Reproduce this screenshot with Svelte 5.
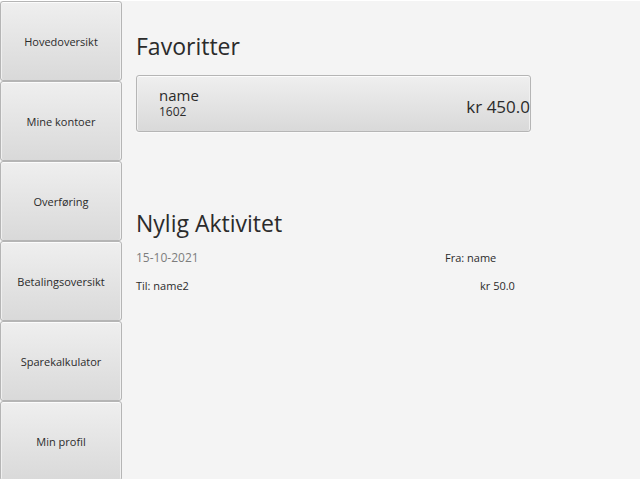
<script>
  const menu = ['Hovedoversikt', 'Mine kontoer', 'Overføring', 'Betalingsoversikt', 'Sparekalkulator', 'Min profil'];
  const favorites = [{ name: 'name', account: '1602', balance: 'kr 450.0' }];
  const activity = [{ date: '15-10-2021', from: 'Fra: name', to: 'Til: name2', amount: 'kr 50.0' }];
</script>

<div class="app">
  <nav>
    {#each menu as item}
      <button>{item}</button>
    {/each}
  </nav>
  <main>
    <section class="favorites">
      <h2>Favoritter</h2>
      {#each favorites as fav}
        <button class="card">
          <span class="info">
            <span class="name">{fav.name}</span>
            <span class="account">{fav.account}</span>
          </span>
          <span class="balance">{fav.balance}</span>
        </button>
      {/each}
    </section>
    <section>
      <h2>Nylig Aktivitet</h2>
      {#each activity as a}
        <div class="entry">
          <span class="date">{a.date}</span>
          <span>{a.from}</span>
          <span>{a.to}</span>
          <span class="amount">{a.amount}</span>
        </div>
      {/each}
    </section>
  </main>
</div>

<style>
  :global(body) {
    background: #f4f4f4;
  }
  .app {
    display: flex;
    min-height: 100vh;
    max-height: 100vh;
    overflow: hidden;
    box-sizing: border-box;
    border-top: 1px solid #fff;
    font: 11px/16px 'Open Sans', 'Noto Sans', sans-serif;
    color: #2b2b2b;
  }
  nav {
    flex: 0 0 122px;
    display: flex;
    flex-direction: column;
  }
  button {
    font: inherit;
    color: inherit;
    border: 1px solid #b5b5b5;
    border-radius: 3px;
    background: linear-gradient(#efefef, #d9d9d9);
    box-shadow: inset 0 1px #fcfcfc, inset 1px 0 #f0f0f0, inset -1px 0 #f0f0f0;
    padding: 0;
  }
  nav button {
    flex: 0 0 80px;
    padding-top: 2px;
  }
  main {
    flex: 1;
    padding: 27px 14px;
    min-width: 0;
  }
  h2 {
    margin: 0;
    font-size: 23px;
    line-height: 36px;
    font-weight: 400;
  }
  .favorites {
    min-height: 177px;
  }
  .card {
    width: 100%;
    max-width: 395px;
    height: 57px;
    margin-top: 11px;
    display: flex;
    justify-content: space-between;
    align-items: center;
    text-align: left;
    box-shadow: inset 0 1px #fcfcfc, inset 1px 0 #f0f0f0, inset -1px 0 #f0f0f0, 0 1px #fafafa;
  }
  .info {
    display: flex;
    flex-direction: column;
    padding-left: 22px;
  }
  .name {
    font-size: 15px;
    line-height: 17px;
  }
  .account {
    font-size: 12px;
  }
  .balance {
    font-size: 17px;
    line-height: 24px;
    padding-top: 6px;
  }
  .entry {
    display: grid;
    grid-template-columns: 309px 1fr;
    row-gap: 12px;
    margin-top: 9px;
  }
  .date {
    font-size: 12px;
    color: #7d7d7d;
  }
  .amount {
    padding-left: 35px;
  }
</style>
